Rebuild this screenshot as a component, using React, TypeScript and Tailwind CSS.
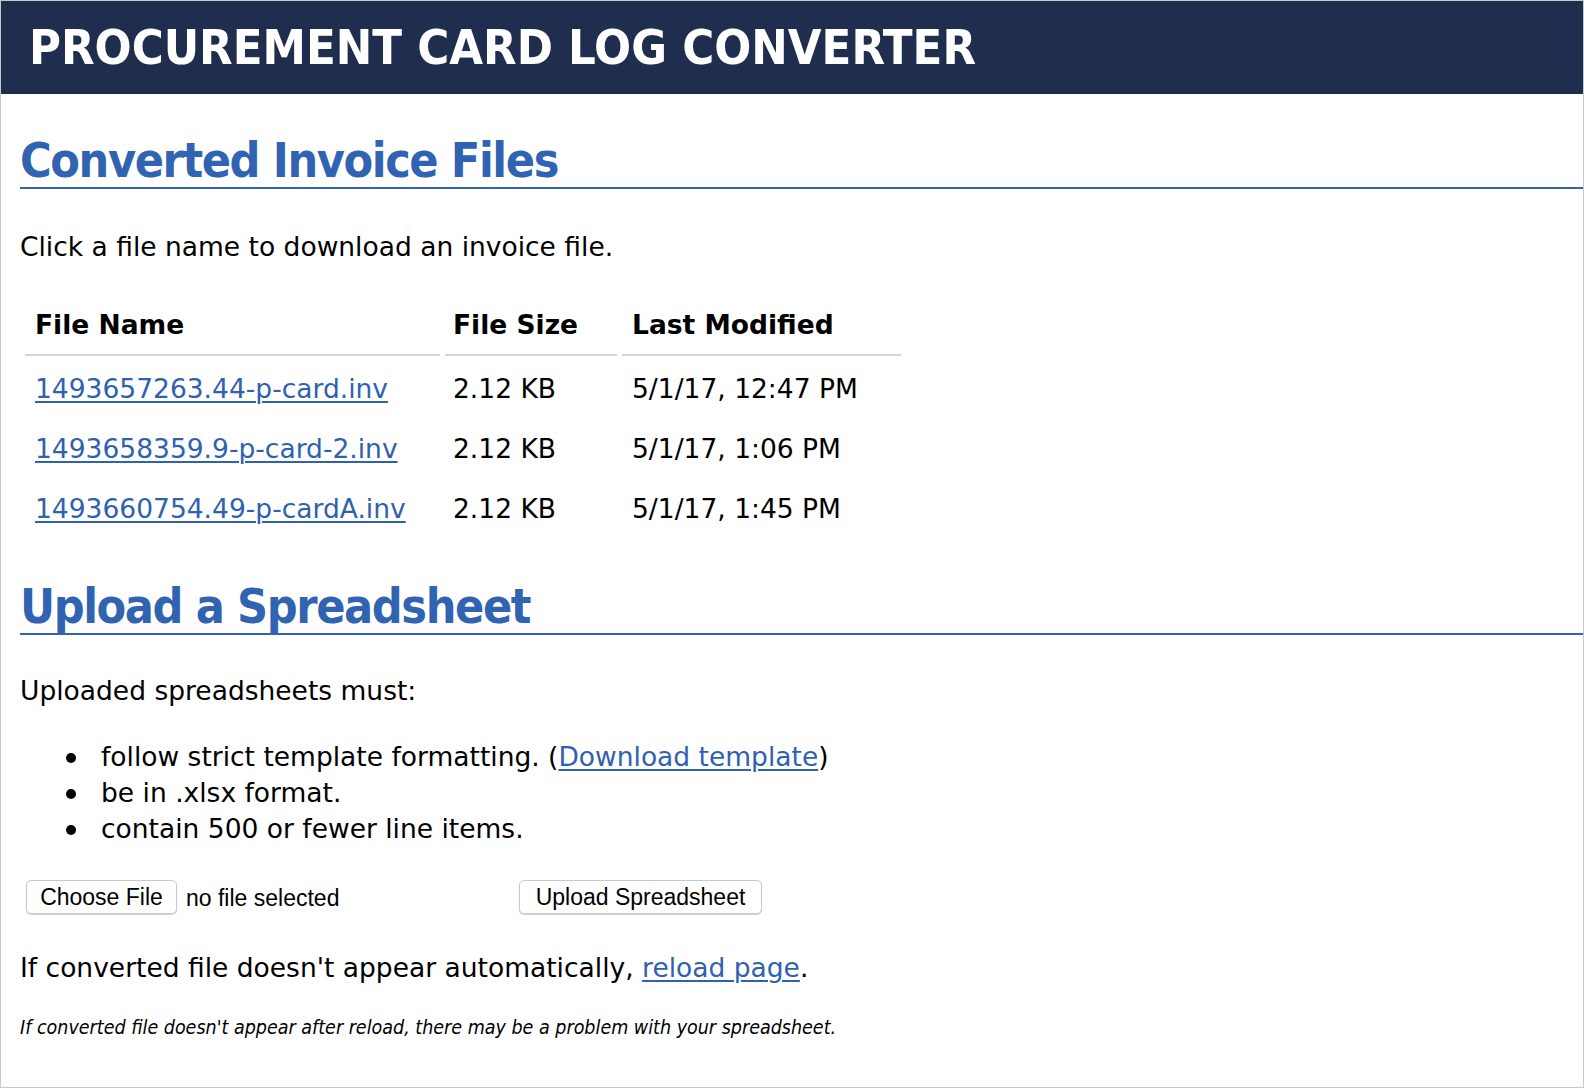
const files = [
  { name: '1493657263.44-p-card.inv', size: '2.12 KB', modified: '5/1/17, 12:47 PM' },
  { name: '1493658359.9-p-card-2.inv', size: '2.12 KB', modified: '5/1/17, 1:06 PM' },
  { name: '1493660754.49-p-cardA.inv', size: '2.12 KB', modified: '5/1/17, 1:45 PM' },
]

const condensed = "font-['DejaVu_Sans_Condensed','DejaVu_Sans',sans-serif]"
const heading = `${condensed} border-b-2 border-[#3063b1] text-[48px] font-bold leading-[54px] tracking-[-1.4px] text-[#3063b1]`
const link = 'text-[#2f61b0] underline underline-offset-[3px] decoration-[1.5px]'
const th = 'border-b-2 border-[#d3d3d3] pt-[10px] pb-[11px] text-left font-bold'

export default function App() {
  return (
    <div className="box-border h-[1088px] overflow-hidden border border-[#c9c9c9] bg-white font-['DejaVu_Sans',sans-serif] text-black">
      <header className="flex h-[93px] items-center bg-[#1f2e4e] pl-[28px]">
        <h1 className={`${condensed} text-[48.5px] font-bold leading-none text-white`}>
          PROCUREMENT CARD LOG CONVERTER
        </h1>
      </header>

      <main className="pl-[19px] text-[26.5px] leading-[36px]">
        <h2 className={`mt-[39px] ${heading}`}>Converted Invoice Files</h2>

        <p className="mt-[40px]">Click a file name to download an invoice file.</p>

        <table className="mt-[28px] border-separate border-spacing-x-[5px] border-spacing-y-[4px]">
          <thead>
            <tr>
              <th className={`w-[415px] pl-[10px] ${th}`}>File Name</th>
              <th className={`w-[172px] pl-[8px] ${th}`}>File Size</th>
              <th className={`w-[279px] pl-[10px] ${th}`}>Last Modified</th>
            </tr>
          </thead>
          <tbody>
            {files.map((file) => (
              <tr key={file.name}>
                <td className="pt-[11px] pb-[9px] pl-[10px]">
                  <a href="#" className={link}>
                    {file.name}
                  </a>
                </td>
                <td className="pt-[11px] pb-[9px] pl-[8px]">{file.size}</td>
                <td className="pt-[11px] pb-[9px] pl-[10px]">{file.modified}</td>
              </tr>
            ))}
          </tbody>
        </table>

        <h2 className={`mt-[39px] ${heading}`}>Upload a Spreadsheet</h2>

        <p className="mt-[38px]">Uploaded spreadsheets must:</p>

        <ul className="mt-[30px] pl-[46px]">
          {[
            <>
              follow strict template formatting. (
              <a href="#" className={link}>
                Download template
              </a>
              )
            </>,
            <>be in .xlsx format.</>,
            <>contain 500 or fewer line items.</>,
          ].map((item, i) => (
            <li key={i} className="flex items-center">
              <span className="flex w-[35px] shrink-0">
                <span className="mt-[2px] h-[10px] w-[10px] rounded-full bg-black" />
              </span>
              <span>{item}</span>
            </li>
          ))}
        </ul>

        <form className="mt-[33px] flex h-[34px] items-center font-['Liberation_Sans',sans-serif] text-[23px] leading-none">
          <div className="flex w-[493px] items-center">
            <button
              type="button"
              className="ml-[6px] h-[34px] w-[151px] rounded-[5px] border border-[#c8c8c8] bg-white shadow-[0_1px_1px_rgba(0,0,0,0.18)]"
            >
              Choose File
            </button>
            <span className="ml-[9px] pt-[2px]">no file selected</span>
          </div>
          <button
            type="button"
            className="ml-[6px] h-[34px] w-[243px] rounded-[5px] border border-[#c8c8c8] bg-white shadow-[0_1px_1px_rgba(0,0,0,0.18)]"
          >
            Upload Spreadsheet
          </button>
        </form>

        <p className="mt-[36px]">
          If converted file doesn't appear automatically,{' '}
          <a href="#" className={link}>
            reload page
          </a>
          .
        </p>

        <p className={`${condensed} mt-[29px] text-[19.5px] italic leading-[26px]`}>
          If converted file doesn't appear after reload, there may be a problem with your
          spreadsheet.
        </p>
      </main>
    </div>
  )
}
